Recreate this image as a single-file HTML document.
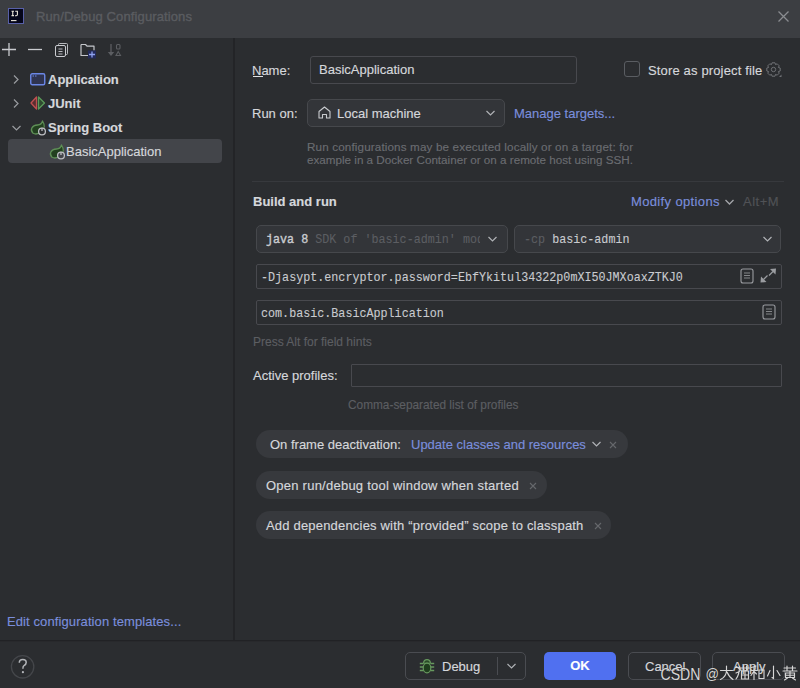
<!DOCTYPE html>
<html><head><meta charset="utf-8">
<style>
*{margin:0;padding:0;box-sizing:border-box}
html,body{width:800px;height:688px;overflow:hidden;background:#2b2d30;font-family:"Liberation Sans",sans-serif;color:#d5d7db}
.a{position:absolute}
.t{position:absolute;white-space:nowrap;font-size:13px;line-height:16px;-webkit-text-stroke:0.15px currentColor}
.mono{font-family:"Liberation Mono",monospace;font-size:13px;color:#c9cbcf;-webkit-text-stroke:0.1px currentColor;transform:scaleX(0.9013);transform-origin:0 0}
.field{position:absolute;border:1px solid #48494e;border-radius:3px}
.combo{position:absolute;border:1px solid #46484c;border-radius:5px;background:#333539}
.chip{position:absolute;background:#37393d;border-radius:14px;height:28px}
.btn{position:absolute;border:1px solid #4a4c51;border-radius:5px;height:28px}
svg{position:absolute;overflow:visible}
</style></head><body>
<!-- title bar -->
<div class="a" style="left:0;top:0;width:800px;height:38px;background:#3c3e42"></div>
<svg style="left:8px;top:8px" width="16" height="16"><rect x="0.5" y="0.5" width="15" height="15" fill="#05061a" stroke="#5860a8" stroke-width="1"/><path d="M3.5 3.2H6M4.75 3.2V7.6M3.5 7.6H6M7.2 3.2H9.4V6.6Q9.4 7.7 8.2 7.7H7" fill="none" stroke="#e8e4d8" stroke-width="1.1"/><path d="M3 12.6H8.5" stroke="#e8e4d8" stroke-width="1.1"/></svg>
<div class="t" style="left:36px;top:9px;color:#5a5c60;font-size:13px;letter-spacing:0.12px;-webkit-text-stroke:0.4px #5a5c60">Run/Debug Configurations</div>
<svg style="left:778px;top:11px" width="11" height="11"><path d="M0.5 0.5L10.5 10.5M10.5 0.5L0.5 10.5" stroke="#8a8c90" stroke-width="1.3"/></svg>

<!-- dividers -->
<div class="a" style="left:233px;top:38px;width:2px;height:602px;background:#232427"></div>
<div class="a" style="left:0;top:640px;width:800px;height:1px;background:#212225"></div><div class="a" style="left:0;top:641px;width:800px;height:1px;background:#28292c"></div>

<!-- left toolbar -->
<svg style="left:2px;top:43px" width="14" height="13"><path d="M7 0V13M0 6.5H14" stroke="#c9cbcf" stroke-width="1.3"/></svg>
<svg style="left:28px;top:43px" width="14" height="13"><path d="M0 6.5H14" stroke="#c9cbcf" stroke-width="1.3"/></svg>
<svg style="left:55px;top:43px" width="13" height="14"><path d="M3.5 2V1.5Q3.5 0.5 4.5 0.5H11.5Q12.5 0.5 12.5 1.5V10.5Q12.5 11.5 11.5 11.5H11" fill="none" stroke="#b8babe"/><rect x="0.5" y="2.5" width="10" height="11" rx="1.5" fill="#2b2d30" stroke="#c9cbcf"/><path d="M3.5 6H7.5M3.5 8.5H7.5M3.5 11H7.5" stroke="#c9cbcf" stroke-width="0.9"/></svg>
<svg style="left:80px;top:43px" width="17" height="16"><path d="M1 1.5H5.5L7 3.2H14V7.5M8 12.5H1V1.5" fill="none" stroke="#c4c6ca" stroke-width="1.2" stroke-linejoin="round"/><rect x="8" y="7.5" width="8" height="8" fill="#232a5a"/><path d="M12 8.5V14.5M9 11.5H15" stroke="#8fa2f0" stroke-width="1.3"/></svg>
<svg style="left:106px;top:43px" width="15" height="14"><path d="M5 1V10" stroke="#5c5e62" stroke-width="1.3"/><path d="M1.8 9H8.2L5 13Z" fill="#5c5e62"/><rect x="10.5" y="1.5" width="3.5" height="4.5" rx="1" fill="none" stroke="#5c5e62" stroke-width="1.1"/><path d="M10 12.5H14.5L12.2 8.5Z" fill="none" stroke="#5c5e62" stroke-width="1.1"/></svg>

<!-- tree -->
<svg style="left:13px;top:75px" width="6" height="9"><path d="M1 0.5L5 4.5L1 8.5" fill="none" stroke="#9a9ca0" stroke-width="1.2"/></svg>
<svg style="left:30px;top:73px" width="16" height="13"><rect x="0.75" y="0.75" width="14" height="11" rx="1.5" fill="#2f3450" stroke="#6b87e6" stroke-width="1.4"/><path d="M2.5 3H4M5 3H6.5" stroke="#6b87e6"/></svg>
<div class="t" style="left:48px;top:72px;font-weight:bold">Application</div>

<svg style="left:13px;top:99px" width="6" height="9"><path d="M1 0.5L5 4.5L1 8.5" fill="none" stroke="#9a9ca0" stroke-width="1.2"/></svg>
<svg style="left:30px;top:96px" width="16" height="14"><path d="M6.5 1L1 7L6.5 13Z" fill="#5a2e30" stroke="#c05050" stroke-width="1.3" stroke-linejoin="round"/><path d="M8.5 1L14.5 7L8.5 13Z" fill="#2e4a30" stroke="#5a9a5a" stroke-width="1.3" stroke-linejoin="round"/></svg>
<div class="t" style="left:48px;top:96px;font-weight:bold">JUnit</div>

<svg style="left:12px;top:125px" width="9" height="6"><path d="M0.5 1L4.5 5L8.5 1" fill="none" stroke="#9a9ca0" stroke-width="1.2"/></svg>
<svg style="left:30px;top:120px" width="16" height="16"><path d="M2.8 13C0 10 1.5 5.5 7.5 5C10 4.8 12 3.2 12.5 1C14.8 4.5 15 9 11.5 11.8C8.5 14 5 14.5 2.8 13Z" fill="#22401f" stroke="#5e8f56" stroke-width="1.3" stroke-linejoin="round"/><circle cx="12" cy="11.5" r="3.4" fill="#2b2d30" stroke="#bcbec2" stroke-width="1.3"/><path d="M12 7.8V11" stroke="#bcbec2" stroke-width="1.3"/></svg>
<div class="t" style="left:48px;top:120px;font-weight:bold">Spring Boot</div>

<div class="a" style="left:8px;top:139px;width:214px;height:24px;background:#43454a;border-radius:4px"></div>
<svg style="left:49px;top:144px" width="16" height="16"><path d="M2.8 13C0 10 1.5 5.5 7.5 5C10 4.8 12 3.2 12.5 1C14.8 4.5 15 9 11.5 11.8C8.5 14 5 14.5 2.8 13Z" fill="#22401f" stroke="#5e8f56" stroke-width="1.3" stroke-linejoin="round"/><circle cx="12" cy="11.5" r="3.4" fill="#43454a" stroke="#bcbec2" stroke-width="1.3"/><path d="M12 7.8V11" stroke="#bcbec2" stroke-width="1.3"/></svg>
<div class="t" style="left:66px;top:144px">BasicApplication</div>

<div class="t" style="left:7px;top:614px;color:#7a8edc;letter-spacing:0.1px">Edit configuration templates...</div>

<!-- right panel -->
<div class="t" style="left:252px;top:63px">Name:</div>
<div class="a" style="left:253px;top:76px;width:10px;height:1px;background:#dfe1e5"></div>
<div class="field" style="left:310px;top:56px;width:267px;height:28px"></div>
<div class="t" style="left:319px;top:62px">BasicApplication</div>

<div class="a" style="left:624px;top:61px;width:16px;height:16px;border:1px solid #5a5d62;border-radius:3px"></div>
<div class="t" style="left:648px;top:63px;letter-spacing:0.15px">Store as project file</div>
<svg style="left:766px;top:62px" width="16" height="16"><circle cx="7.5" cy="7.5" r="2.2" fill="none" stroke="#6f7175"/><path d="M6 0.8H9L9.5 2.6L11.2 1.8L13.2 3.8L12.4 5.5L14.2 6V9L12.4 9.5L13.2 11.2L11.2 13.2L9.5 12.4L9 14.2H6L5.5 12.4L3.8 13.2L1.8 11.2L2.6 9.5L0.8 9V6L2.6 5.5L1.8 3.8L3.8 1.8L5.5 2.6Z" fill="none" stroke="#6f7175" stroke-linejoin="round"/><path d="M13 15L15.5 12.5V15Z" fill="#6f7175"/></svg>

<div class="t" style="left:252px;top:106px">Run on:</div>
<div class="combo" style="left:307px;top:99px;width:198px;height:28px"></div>
<svg style="left:318px;top:106px" width="13" height="13"><path d="M1 5.5L6.5 1L12 5.5V12H8.5V8.5H4.5V12H1Z" fill="none" stroke="#c9cbcf" stroke-width="1.1" stroke-linejoin="round"/></svg>
<div class="t" style="left:337px;top:106px">Local machine</div>
<svg style="left:486px;top:110px" width="9" height="6"><path d="M0.5 1L4.5 5L8.5 1" fill="none" stroke="#b0b2b6" stroke-width="1.2"/></svg>
<div class="t" style="left:514px;top:106px;color:#7a8edc">Manage targets...</div>

<div class="t" style="left:307px;top:140px;font-size:11.66px;line-height:13px;color:#6a6c70;letter-spacing:0.14px">Run configurations may be executed locally or on a target: for</div>
<div class="t" style="left:307px;top:153px;font-size:11.66px;line-height:13px;color:#6a6c70">example in a Docker Container or on a remote host using SSH.</div>

<div class="a" style="left:252px;top:181px;width:532px;height:1px;background:#37393d"></div>
<div class="t" style="left:253px;top:194px;font-weight:bold">Build and run</div>
<div class="t" style="left:631px;top:194px;color:#7a8edc;letter-spacing:0.36px">Modify options</div>
<svg style="left:725px;top:199px" width="9" height="6"><path d="M0.5 1L4.5 5L8.5 1" fill="none" stroke="#a4a6aa" stroke-width="1.3"/></svg>
<div class="t" style="left:743px;top:194px;color:#505256;letter-spacing:0.5px">Alt+M</div>

<div class="combo" style="left:256px;top:225px;width:252px;height:28px"></div>
<div class="a" style="left:266px;top:228px;width:214px;height:22px;overflow:hidden"><div class="t mono" style="left:0;top:4px"><span style="-webkit-text-stroke:0.4px #c9cbcf">java 8</span> <span style="color:#5c5e62">SDK of 'basic-admin' module</span></div></div>
<svg style="left:488px;top:236px" width="9" height="6"><path d="M0.5 1L4.5 5L8.5 1" fill="none" stroke="#b0b2b6" stroke-width="1.2"/></svg>

<div class="combo" style="left:514px;top:225px;width:267px;height:28px"></div>
<div class="t mono" style="left:524px;top:232px"><span style="color:#5c5e62">-cp</span> <span style="-webkit-text-stroke:0.12px #c9cbcf">basic-admin</span></div>
<svg style="left:763px;top:236px" width="9" height="6"><path d="M0.5 1L4.5 5L8.5 1" fill="none" stroke="#b0b2b6" stroke-width="1.2"/></svg>

<div class="field" style="left:256px;top:264px;width:526px;height:25px;border-radius:2px"></div>
<div class="t mono" style="left:261px;top:270px">-Djasypt.encryptor.password=EbfYkitul34322p0mXI50JMXoaxZTKJ0</div>
<svg style="left:740px;top:268px" width="14" height="15"><rect x="1" y="1" width="12" height="14" rx="2" fill="none" stroke="#9a9ca0" stroke-width="1.1"/><path d="M4 5H10M4 7.5H10M4 10H10" stroke="#9a9ca0" stroke-width="0.8"/></svg>
<svg style="left:760px;top:268px" width="17" height="15"><path d="M16 0.5L10 1L15.5 6.5Z M0.5 14.5L1 8.5L6.5 14Z" fill="#9a9ca0"/><path d="M13 3.5L9 7.5M3.5 11.5L7.5 7.5" stroke="#9a9ca0" stroke-width="1.2"/></svg>

<div class="field" style="left:256px;top:300px;width:526px;height:25px;border-radius:2px"></div>
<div class="t mono" style="left:261px;top:306px">com.basic.BasicApplication</div>
<svg style="left:762px;top:304px" width="14" height="15"><rect x="1" y="1" width="12" height="14" rx="2" fill="none" stroke="#9a9ca0" stroke-width="1.1"/><path d="M4 5H10M4 7.5H10M4 10H10" stroke="#9a9ca0" stroke-width="0.8"/></svg>

<div class="t" style="left:253px;top:334px;font-size:12px;color:#5c5e62">Press Alt for field hints</div>

<div class="t" style="left:253px;top:368px">Active profiles:</div>
<div class="field" style="left:351px;top:364px;width:431px;height:23px;border-radius:1px"></div>
<div class="t" style="left:348px;top:397px;font-size:11.85px;color:#5c5e62">Comma-separated list of profiles</div>

<div class="chip" style="left:256px;top:430px;width:372px"></div>
<div class="t" style="left:270px;top:437px">On frame deactivation:</div>
<div class="t" style="left:411px;top:437px;color:#7a8edc">Update classes and resources</div>
<svg style="left:592px;top:441px" width="9" height="6"><path d="M0.5 1L4.5 5L8.5 1" fill="none" stroke="#b0b2b6" stroke-width="1.2"/></svg>
<svg style="left:609px;top:441px" width="8" height="8"><path d="M1 1L7 7M7 1L1 7" stroke="#66686c" stroke-width="1.1"/></svg>

<div class="chip" style="left:256px;top:471px;width:291px"></div>
<div class="t" style="left:266px;top:478px;letter-spacing:0.24px">Open run/debug tool window when started</div>
<svg style="left:529px;top:482px" width="8" height="8"><path d="M1 1L7 7M7 1L1 7" stroke="#66686c" stroke-width="1.1"/></svg>

<div class="chip" style="left:256px;top:511px;width:355px"></div>
<div class="t" style="left:266px;top:518px;letter-spacing:0.19px">Add dependencies with “provided” scope to classpath</div>
<svg style="left:594px;top:522px" width="8" height="8"><path d="M1 1L7 7M7 1L1 7" stroke="#66686c" stroke-width="1.1"/></svg>

<!-- bottom bar -->
<svg style="left:11px;top:655px" width="24" height="24"><circle cx="11.6" cy="11.8" r="11.2" fill="none" stroke="#45474b" stroke-width="1.3"/><path d="M8.3 7.8Q8.3 4.6 11.8 4.6Q15.2 4.6 15.2 7.6Q15.2 9.6 13 10.6Q11.9 11.2 11.9 13.8" fill="none" stroke="#b4b6ba" stroke-width="1.5"/><circle cx="11.9" cy="17.2" r="1.1" fill="#b4b6ba"/></svg>

<div class="btn" style="left:405px;top:652px;width:121px"></div>
<div class="a" style="left:497px;top:657px;width:1px;height:18px;background:#4a4c51"></div>
<svg style="left:419px;top:658px" width="16" height="16"><path d="M4.5 5.2Q4.8 1.6 8 1.6Q11.2 1.6 11.5 5.2Z" fill="#2a4a28" stroke="#67995e" stroke-width="1.1"/><ellipse cx="8" cy="10" rx="3.8" ry="4.8" fill="#1f3d1d" stroke="#67995e" stroke-width="1.2"/><path d="M0.8 5.5H4.2M11.8 5.5H15.2M0.8 9H4.2M11.8 9H15.2M0.8 12.5H4.5M11.5 12.5H15.2" stroke="#67995e" stroke-width="1.3"/></svg>
<div class="t" style="left:442px;top:659px">Debug</div>
<svg style="left:507px;top:663px" width="9" height="6"><path d="M0.5 1L4.5 5L8.5 1" fill="none" stroke="#b0b2b6" stroke-width="1.2"/></svg>

<div class="a" style="left:544px;top:652px;width:72px;height:28px;background:#5070f0;border-radius:5px"></div>
<div class="t" style="left:544px;top:658px;width:72px;text-align:center;font-weight:bold;color:#fff">OK</div>

<div class="btn" style="left:628px;top:652px;width:73px"></div>
<div class="t" style="left:645px;top:659px">Cancel</div>
<div class="btn" style="left:712px;top:652px;width:73px"></div>
<div class="t" style="left:733px;top:659px">Apply</div>

<svg style="left:0;top:0" width="800" height="688">
<g fill="#d6d6d6" stroke="#222" stroke-width="0.6" paint-order="stroke" font-family="Liberation Sans" font-size="17">
<text x="660.5" y="679.5" textLength="40" lengthAdjust="spacingAndGlyphs">CSDN</text>
<text x="705.5" y="678.5" font-size="15" textLength="13.5" lengthAdjust="spacingAndGlyphs">@</text>
</g>
<g fill="none" stroke="#d6d6d6" stroke-width="1.15" stroke-linecap="round">
<g transform="translate(719.5,665.5)"><path d="M1 5H13M7 0.5V5C7 9 5 12 1 14M7.5 6.5C9 10 11 12.5 13.5 14"/></g>
<g transform="translate(735,665.5)"><path d="M1.5 1L4 3M4.5 1C4.5 7 3 11 1 13.5M1 7.5L4.5 6M5.5 2.5H14.5M8.5 0.5V4M11.5 0.5V4M6.5 5.5H13.5V13.5H6.5ZM6.5 9.5H13.5M10 5.5V13.5"/></g>
<g transform="translate(750.5,665.5)"><path d="M1 2L5.5 0.5M0.5 5H6.5M3.5 1.5V14M3.5 5.5L0.5 10M3.5 6L6 8.5M8.5 4.5H13.5V13H8.5Z"/></g>
<g transform="translate(766.5,665.5)"><path d="M7 0.5V13L5.5 12M3.5 5L1 10.5M10.5 5L13.5 10"/></g>
<g transform="translate(782.5,665.5)"><path d="M1.5 2.5H13M4.5 0.5V5M10 0.5V5M0.5 5.5H14.5M3 7.5H12V12H3ZM3 9.75H12M7.5 5.5V12M5 12.5L2 14.5M10 12.5L13 14.5"/></g>
</g></svg>
</body></html>
